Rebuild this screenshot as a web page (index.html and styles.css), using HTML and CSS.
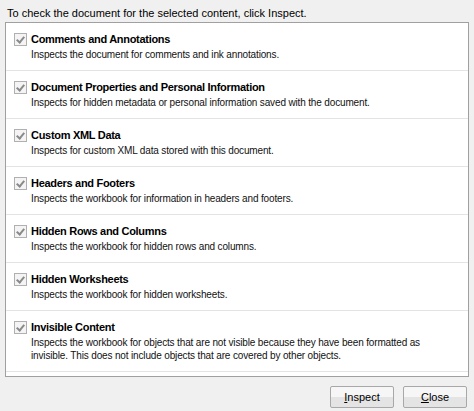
FILE: index.html
```html
<!DOCTYPE html>
<html lang="en">
<head>
    <meta charset="UTF-8">
    <meta name="viewport" content="width=device-width, initial-scale=1.0">
    <title>Document Inspector</title>
    <link rel="stylesheet" href="styles.css">
</head>
<body>
    <div class="dialog">
        <p class="intro">To check the document for the selected content, click Inspect.</p>
        <ul class="checks">
            <li class="check">
                <span class="box"></span>
                <div>
                    <h3>Comments and Annotations</h3>
                    <p>Inspects the document for comments and ink annotations.</p>
                </div>
            </li>
            <li class="check">
                <span class="box"></span>
                <div>
                    <h3>Document Properties and Personal Information</h3>
                    <p>Inspects for hidden metadata or personal information saved with the document.</p>
                </div>
            </li>
            <li class="check">
                <span class="box"></span>
                <div>
                    <h3>Custom XML Data</h3>
                    <p>Inspects for custom XML data stored with this document.</p>
                </div>
            </li>
            <li class="check">
                <span class="box"></span>
                <div>
                    <h3>Headers and Footers</h3>
                    <p>Inspects the workbook for information in headers and footers.</p>
                </div>
            </li>
            <li class="check">
                <span class="box"></span>
                <div>
                    <h3>Hidden Rows and Columns</h3>
                    <p>Inspects the workbook for hidden rows and columns.</p>
                </div>
            </li>
            <li class="check">
                <span class="box"></span>
                <div>
                    <h3>Hidden Worksheets</h3>
                    <p>Inspects the workbook for hidden worksheets.</p>
                </div>
            </li>
            <li class="check">
                <span class="box"></span>
                <div>
                    <h3>Invisible Content</h3>
                    <p>Inspects the workbook for objects that are not visible because they have been formatted as invisible. This does not include objects that are covered by other objects.</p>
                </div>
            </li>
        </ul>
        <div class="btns">
            <button><u>I</u>nspect</button>
            <button><u>C</u>lose</button>
        </div>
    </div>
</body>
</html>
```

FILE: styles.css
```css
body{
    margin: 0;
    background-color: #f0f0f0;
    font-family: 'Liberation Sans', Arial, sans-serif;
    font-size: 11px;
    color: #000;
}
.dialog{
    width: 474px;
    height: 411px;
    box-sizing: border-box;
    padding: 0 5px;
}
.intro{
    margin: 0;
    padding: 6px 2px 0;
    height: 16px;
    line-height: 14px;
}
.checks{
    list-style: none;
    margin: 0;
    padding: 0;
    height: 355px;
    box-sizing: border-box;
    background-color: #fff;
    border: 1px solid #a0a0a0;
}
.check{
    display: flex;
    gap: 4px;
    padding: 9px 8px 9px;
    border-bottom: 1px solid #e4e4e4;
}
.check h3{
    margin: 0;
    font-size: 11px;
    font-weight: bold;
    letter-spacing: -0.3px;
    line-height: 14px;
}
.check p{
    margin: 2px 34px 0 0;
    font-size: 10px;
    letter-spacing: -0.15px;
    line-height: 13px;
    color: #111;
}
.box{
    flex: none;
    position: relative;
    width: 11px;
    height: 11px;
    margin-top: 1px;
    border: 1px solid #b0b0b0;
    background-color: #f4f4f4;
}
/* grey tick of a disabled, checked box */
.box::after{
    content: "";
    position: absolute;
    left: 3px;
    top: 1px;
    width: 3px;
    height: 6px;
    border: solid #8a8a8a;
    border-width: 0 2px 2px 0;
    transform: rotate(40deg);
}
.btns{
    display: flex;
    justify-content: flex-end;
    gap: 9px;
    padding: 9px 2px 0;
}
.btns button{
    width: 64px;
    height: 22px;
    font-family: inherit;
    font-size: 11px;
    color: #000;
    border: 1px solid #a8a8a8;
    border-radius: 2px;
    background: linear-gradient(#f6f6f6 50%, #e4e4e4 50%);
}
```
